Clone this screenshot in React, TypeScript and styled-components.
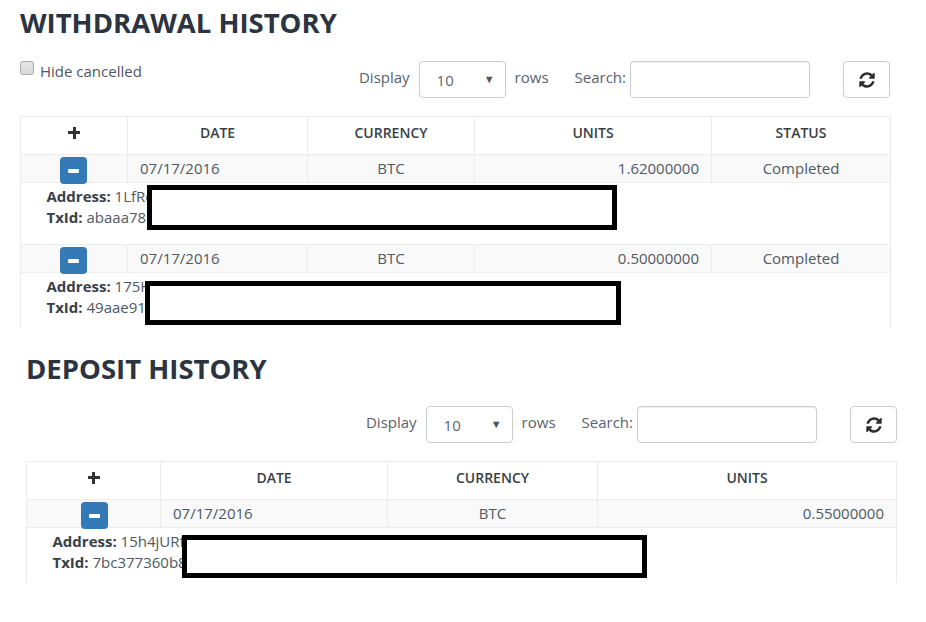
import React from "react";
import styled, { createGlobalStyle } from "styled-components";

const GlobalStyle = createGlobalStyle`
  html, body {
    margin: 0;
    padding: 0;
    background: #fff;
  }
  body {
    font-family: "Open Sans", "Liberation Sans", sans-serif;
    font-size: 15px;
    color: #4a4f55;
  }
`;

const RefreshIcon: React.FC = () => (
  <svg width="18" height="18" viewBox="0 0 1792 1792" fill="#2d2d2d">
    <path d="M1639 1056q0 5-1 7-64 268-268 434.5t-478 166.5q-146 0-282.5-55t-243.5-157l-129 129q-19 19-45 19t-45-19-19-45v-448q0-26 19-45t45-19h448q26 0 45 19t19 45-19 45l-137 137q71 66 161 102t187 36q134 0 250-65t186-179q11-17 53-117 8-23 30-23h192q13 0 22.5 9.5t9.5 22.5zm25-800v448q0 26-19 45t-45 19h-448q-26 0-45-19t-19-45 19-45l138-138q-148-137-349-137-134 0-250 65t-186 179q-11 17-53 117-8 23-30 23h-199q-13 0-22.5-9.5t-9.5-22.5v-7q65-268 270-434.5t480-166.5q146 0 284 55.5t245 156.5l130-129q19-19 45-19t45 19 19 45z" />
  </svg>
);

type Row = {
  date: string;
  currency: string;
  units: string;
  status?: string;
  address: string;
  txid: string;
  detailHeight: number;
  box: { left: number; top: number; width: number; height: number };
};

type HistoryProps = {
  title: string;
  indent: number;
  width: number;
  titleTop: number;
  toolbarTop: number;
  toggleLeft: number;
  hideToggle?: boolean;
  columns: number[];
  headers: string[];
  rows: Row[];
};

const History: React.FC<HistoryProps> = ({
  title,
  indent,
  width,
  titleTop,
  toolbarTop,
  toggleLeft,
  hideToggle,
  columns,
  headers,
  rows,
}) => (
  <Section $indent={indent} $width={width}>
    <Title $top={titleTop}>{title}</Title>
    <Toolbar $top={toolbarTop}>
      {hideToggle ? (
        <HideLabel>
          <CheckBox />
          Hide cancelled
        </HideLabel>
      ) : (
        <span />
      )}
      <Controls>
        <ControlText>Display</ControlText>
        <Select>
          <span>10</span>
          <Arrow>▼</Arrow>
        </Select>
        <RowsText>rows</RowsText>
        <SearchText>Search:</SearchText>
        <SearchInput />
        <RefreshButton>
          <RefreshIcon />
        </RefreshButton>
      </Controls>
    </Toolbar>
    <Table>
      <colgroup>
        {columns.map((w, i) => (
          <Col key={i} $w={w} />
        ))}
      </colgroup>
      <thead>
        <tr>
          <HeadCell>
            <PlusIcon />
          </HeadCell>
          {headers.map((h) => (
            <HeadCell key={h}>{h}</HeadCell>
          ))}
        </tr>
      </thead>
      <tbody>
        {rows.map((row, i) => (
          <React.Fragment key={i}>
            <DataRow>
              <ToggleCell>
                <MinusButton $left={toggleLeft}>
                  <MinusBar />
                </MinusButton>
              </ToggleCell>
              <DataCell $align="left">{row.date}</DataCell>
              <DataCell $align="center">{row.currency}</DataCell>
              <DataCell $align="right">{row.units}</DataCell>
              {row.status && <DataCell $align="center">{row.status}</DataCell>}
            </DataRow>
            <tr>
              <DetailCell colSpan={columns.length} $h={row.detailHeight}>
                <DetailInner $h={row.detailHeight}>
                  <DetailLine>
                    <b>Address:</b> {row.address}
                  </DetailLine>
                  <DetailLine>
                    <b>TxId:</b> {row.txid}
                  </DetailLine>
                  <Redaction
                    style={{
                      left: row.box.left,
                      top: row.box.top,
                      width: row.box.width,
                      height: row.box.height,
                    }}
                  />
                </DetailInner>
              </DetailCell>
            </tr>
          </React.Fragment>
        ))}
      </tbody>
    </Table>
  </Section>
);

const App: React.FC = () => (
  <>
    <GlobalStyle />
    <History
      title="WITHDRAWAL HISTORY"
      indent={20}
      width={870}
      titleTop={4}
      toolbarTop={19}
      toggleLeft={39}
      hideToggle
      columns={[107, 180, 167, 237, 179]}
      headers={["DATE", "CURRENCY", "UNITS", "STATUS"]}
      rows={[
        {
          date: "07/17/2016",
          currency: "BTC",
          units: "1.62000000",
          status: "Completed",
          address: "1LfRe",
          txid: "abaaa78c",
          detailHeight: 61,
          box: { left: 126, top: 2, width: 470, height: 45 },
        },
        {
          date: "07/17/2016",
          currency: "BTC",
          units: "0.50000000",
          status: "Completed",
          address: "175H",
          txid: "49aae91",
          detailHeight: 55,
          box: { left: 124, top: 8, width: 476, height: 44 },
        },
      ]}
    />
    <History
      title="DEPOSIT HISTORY"
      indent={26}
      width={871}
      titleTop={22}
      toolbarTop={18}
      toggleLeft={54}
      columns={[134, 227, 210, 299]}
      headers={["DATE", "CURRENCY", "UNITS"]}
      rows={[
        {
          date: "07/17/2016",
          currency: "BTC",
          units: "0.55000000",
          address: "15h4jURf",
          txid: "7bc377360b8",
          detailHeight: 55,
          box: { left: 155, top: 7, width: 465, height: 43 },
        },
      ]}
    />
  </>
);

const Section = styled.section<{ $indent: number; $width: number }>`
  width: ${(p) => p.$width}px;
  margin-left: ${(p) => p.$indent}px;
`;

const Title = styled.h2<{ $top: number }>`
  margin: ${(p) => p.$top}px 0 0;
  font-size: 27.5px;
  line-height: 38px;
  font-weight: 700;
  color: #2b3440;
`;

const Toolbar = styled.div<{ $top: number }>`
  display: flex;
  justify-content: space-between;
  align-items: flex-start;
  margin-top: ${(p) => p.$top}px;
  margin-bottom: 18px;
  height: 37px;
`;

const HideLabel = styled.label`
  display: flex;
  align-items: center;
  gap: 6px;
  line-height: 20px;
  color: #4f5864;
`;

const CheckBox = styled.span`
  box-sizing: border-box;
  width: 14px;
  height: 14px;
  margin-top: -7px;
  border: 1px solid #a9a9a9;
  border-radius: 3px;
  background: linear-gradient(#e6e6e6, #d8d8d8);
`;

const Controls = styled.div`
  display: flex;
  align-items: flex-start;
  height: 37px;
`;

const ControlText = styled.span`
  line-height: 33px;
  margin-right: 9px;
  color: #5a626c;
`;

const Select = styled.div`
  box-sizing: border-box;
  display: flex;
  justify-content: space-between;
  align-items: center;
  width: 87px;
  height: 37px;
  padding: 1px 10px 0 17px;
  border: 1px solid #ccc;
  border-radius: 4px;
  color: #5a6675;
`;

const Arrow = styled.span`
  font-size: 11px;
  color: #555;
  margin-top: -3px;
`;

const RowsText = styled(ControlText)`
  margin-left: 9px;
  margin-right: 26px;
`;

const SearchText = styled(ControlText)`
  margin-right: 4px;
`;

const SearchInput = styled.div`
  box-sizing: border-box;
  width: 180px;
  height: 37px;
  border: 1px solid #ccc;
  border-radius: 4px;
  box-shadow: inset 0 1px 1px rgba(0, 0, 0, 0.075);
`;

const RefreshButton = styled.div`
  box-sizing: border-box;
  display: flex;
  align-items: center;
  justify-content: center;
  width: 47px;
  height: 37px;
  margin-left: 33px;
  border: 1px solid #ccc;
  border-radius: 4px;
`;

const Table = styled.table`
  table-layout: fixed;
  width: 870px;
  border-collapse: collapse;
`;

const Col = styled.col<{ $w: number }>`
  width: ${(p) => p.$w}px;
`;

const HeadCell = styled.th`
  height: 38px;
  padding: 0 0 6px;
  box-sizing: border-box;
  border: 1px solid #ececec;
  font-size: 14px;
  font-weight: 600;
  text-align: center;
  color: #3a3f46;
`;

const PlusIcon = styled.span`
  display: block;
  width: 12px;
  height: 12px;
  margin: 0 auto;
  background: linear-gradient(#333, #333) center / 12px 3px no-repeat,
    linear-gradient(#333, #333) center / 3px 12px no-repeat;
`;

const DataRow = styled.tr`
  background: #f9f9f9;
`;

const ToggleCell = styled.td`
  height: 27px;
  padding: 0;
  border: 1px solid #ececec;
  vertical-align: top;
`;

const MinusButton = styled.div<{ $left: number }>`
  position: relative;
  z-index: 1;
  display: flex;
  align-items: center;
  justify-content: center;
  width: 27px;
  height: 27px;
  margin: 2px 0 -2px ${(p) => p.$left}px;
  background: #337ab7;
  border-radius: 4px;
`;

const MinusBar = styled.span`
  width: 11px;
  height: 4px;
  background: #fff;
  border-radius: 1px;
`;

const DataCell = styled.td<{ $align: "left" | "center" | "right" }>`
  height: 26px;
  padding: 0 12px 1px;
  box-sizing: content-box;
  border: 1px solid #ececec;
  text-align: ${(p) => p.$align};
  color: #4f5864;
  line-height: 20px;
`;

const DetailCell = styled.td<{ $h: number }>`
  height: ${(p) => p.$h}px;
  padding: 0;
  border-left: 1px solid #ececec;
  border-right: 1px solid #ececec;
  vertical-align: top;
`;

const DetailInner = styled.div<{ $h: number }>`
  position: relative;
  height: ${(p) => p.$h}px;
  padding: 3px 0 0 25.5px;
  box-sizing: border-box;
`;

const DetailLine = styled.div`
  line-height: 21px;
  color: #4f5864;
  white-space: nowrap;
  b {
    font-weight: 700;
    color: #3a3f46;
  }
`;

const Redaction = styled.div`
  position: absolute;
  box-sizing: border-box;
  border: 5px solid #000;
  background: #fff;
`;

export default App;
